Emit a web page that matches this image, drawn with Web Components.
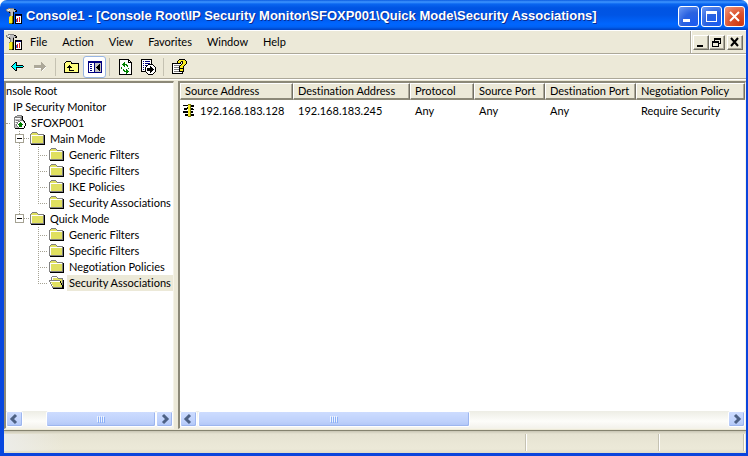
<!DOCTYPE html>
<html lang="en">
<head>
<meta charset="utf-8">
<title>Console1</title>
<style>
  html, body { height: 100%; margin: 0; }
  body {
    font-family: Lato, "Liberation Sans", sans-serif;
    font-size: 11px;
    font-variant-ligatures: none;
    line-height: 16px;
    color: #000;
    background: #fff;
    overflow: hidden;
    --face: #ece9d8;
    --shadow: #aca899;
    --dark: #716f64;
  }
</style>
</head>
<body>
<mmc-window>
  <title-bar slot="title">Console1 - [Console Root\IP Security Monitor\SFOXP001\Quick Mode\Security Associations]</title-bar>
  <menu-bar slot="menu"></menu-bar>
  <tool-bar slot="tools"></tool-bar>
  <scroll-pane slot="tree" before="24" size="110" after="0">
    <tree-item level="0">nsole Root</tree-item>
    <tree-item level="1">IP Security Monitor</tree-item>
    <tree-item level="2" icon="server">SFOXP001</tree-item>
    <tree-item level="3" icon="folder" guides="box">Main Mode</tree-item>
    <tree-item level="4" icon="folder" guides="line tee">Generic Filters</tree-item>
    <tree-item level="4" icon="folder" guides="line tee">Specific Filters</tree-item>
    <tree-item level="4" icon="folder" guides="line tee">IKE Policies</tree-item>
    <tree-item level="4" icon="folder" guides="line end">Security Associations</tree-item>
    <tree-item level="3" icon="folder" guides="boxend">Quick Mode</tree-item>
    <tree-item level="4" icon="folder" guides="none tee">Generic Filters</tree-item>
    <tree-item level="4" icon="folder" guides="none tee">Specific Filters</tree-item>
    <tree-item level="4" icon="folder" guides="none tee">Negotiation Policies</tree-item>
    <tree-item level="4" icon="open" guides="none end" selected>Security Associations</tree-item>
  </scroll-pane>
  <scroll-pane slot="list" before="1" size="272" after="259">
    <result-list></result-list>
  </scroll-pane>
  <status-bar slot="status"></status-bar>
</mmc-window>

<script>
const PALETTE = {
  k: '#000', w: '#fff', g: '#808080', s: '#c0c0c0', y: '#e0e060', Y: '#f8ec20',
  r: '#e02020', b: '#000080', B: '#3050e0', c: '#00ffff', G: '#008000', d: '#aca899',
  o: '#808000', l: '#ffff80'
};

const ICONS = {
  console: [
    '..gggggg........',
    'gsswsssskk......',
    'gswssssssgk.....',
    '.gggsssgskk.....',
    '...kgssk........',
    '....gssk........',
    '....gssk.kkkkkkk',
    '....gssk.kbbbbbk',
    '...gYYok.kwwwwwk',
    '...YYYok.kwwwrwk',
    '...YYYok.kwrwrwk',
    '...YYYok.kBrwrwk',
    '...YYYok.kBrwrwk',
    '...YYYok.kBrwrwk',
    '...YYYok.kwwwwwk',
    '...oookk.kkkkkkk'
  ],
  folder: [
    '................',
    '..ggggg.........',
    '.gyyyyyg........',
    'gyyyyyyygggggg..',
    'gwwwwwwwwwwwwgk.',
    'gwyyyyyyyyyyygk.',
    'gwyyyyyyyyyyygk.',
    'gwyyyyyyyyyyygk.',
    'gwyyyyyyyyyyygk.',
    'gwyyyyyyyyyyygk.',
    'gwyyyyyyyyyyygk.',
    'gwyyyyyyyyyyygk.',
    'ggggggggggggggk.',
    '.kkkkkkkkkkkkkk.'
  ],
  open: [
    '................',
    '...ggggg........',
    '..gwwwwwg.......',
    '..gwyyyyyggggg..',
    '..gwyyyyyyyyyg..',
    'gggggggggggyygk.',
    'gwwwwwwwwwwkygk.',
    '.gyyyyyyyyykygk.',
    '.gwyyyyyyyyykgk.',
    '..gyyyyyyyyykgk.',
    '..gwyyyyyyyyykk.',
    '...gyyyyyyyyykk.',
    '...ggggggggggkk.',
    '....kkkkkkkkkkk.'
  ],
  server: [
    '......ggggg.....',
    '....ggssssgk....',
    '...ggggggggk....',
    '...gwwwwwsgk....',
    '...gssssssgk....',
    '...gsgggsgggk...',
    '...gwwwggwwwgk..',
    '...gsggwwGwwwk..',
    '...gwwgwGGGwwwk.',
    '...gsgwGGGGGwwk.',
    '...gsgwwGGGwwwk.',
    '...gssgwGGGwwk..',
    '...gsssgwwwwwk..',
    '....kkkkkkkkk...'
  ],
  back: [
    '................',
    '................',
    '................',
    '.....kk.........',
    '....kck.........',
    '...kcck.........',
    '..kccckkkkkkk...',
    '.kccccccccccck..',
    '..kccckkkkkkk...',
    '...kcck.........',
    '....kck.........',
    '.....kk.........'
  ],
  forward: [
    '................',
    '................',
    '................',
    '........d.......',
    '........dd......',
    '........ddd.....',
    '.ddddddddddd....',
    '.dddddddddddd...',
    '.dddddddddddw...',
    '..wwwwwwdddw....',
    '........ddw.....',
    '........dw......'
  ],
  up: [
    '................',
    '................',
    '..kkkkk.........',
    '.klllllk........',
    'kllllllkkkkkkkk.',
    'klllllllllllllk.',
    'kllllkllllllllk.',
    'klllkkklllllllk.',
    'kllkkkkkllllllk.',
    'kllllkllllllllk.',
    'kllllkllllllllk.',
    'kllllkkkkkllllk.',
    'klllllllllllllk.',
    'kkkkkkkkkkkkkkk.'
  ],
  panes: [
    '................',
    '................',
    '.bbbbbbbbbbbbbb.',
    '.bbbbbbbbbbbbbb.',
    '.bwwwwwbssssssb.',
    '.bwbbwwbssssksb.',
    '.bwwwwwbssskksb.',
    '.bwbbwwbsskkksb.',
    '.bwwwwwbskkkksb.',
    '.bwbbwwbsskkksb.',
    '.bwwwwwbssskksb.',
    '.bwbbwwbssssksb.',
    '.bwwwwwbssssssb.',
    '.bbbbbbbbbbbbbb.'
  ],
  refresh: [
    '.kkkkkkkkkk.....',
    '.kwwwwwwwwkk....',
    '.kwwwwwwwwkwk...',
    '.kwwwwGwwwkkkk..',
    '.kwwwGGwwwwwwk..',
    '.kwwGGGGGwwwwk..',
    '.kwwwGGwGGwwwk..',
    '.kwwwwGwwGwwwk..',
    '.kwGwwwwwwwwwk..',
    '.kwGwwwwwwGwwk..',
    '.kwwwGwwGwwwwk..',
    '.kwwwGGwGGwwwk..',
    '.kwwwwGGGGGwwk..',
    '.kwwwwwwGGwwwk..',
    '.kwwwwwwGwwwwk..',
    '.kkkkkkkkkkkkk..'
  ],
  export: [
    'kkkkkkkkkkk.....',
    'kwwwwwwwwwk.....',
    'kwbwbbbbbwk.....',
    'kwwwwwwwwwk.....',
    'kwbwbbbbbwk.....',
    'kwwwwwwkkkkk....',
    'kwbwbbkwwwwwk...',
    'kwwwwkwwwkwwwk..',
    'kwbwkwwwwkkwwwk.',
    'kwwwkwkkkkkkwwk.',
    'kwbwkwkkkkkkkwk.',
    'kwwwkwkkkkkkwwk.',
    'kkkkkwwwwkkwwwk.',
    '.....kwwwkwwwk..',
    '......kwwwwwk...',
    '.......kkkkk....'
  ],
  help: [
    '.......kkkkkk...',
    '......kYYYYYYk..',
    '.....kYYYkkYYYk.',
    '.....kYYk.kYYYk.',
    'kkkkkkkkk.kYYYk.',
    'kwwwwwwwwkYYYk..',
    'kwggggggkYYYk...',
    'kwwwwwwkYYYk....',
    'kwgggggkYYYk....',
    'kwwwwwwkkkkk....',
    'kwgggggkYYYk....',
    'kwwwwwwkYYYk....',
    'kwgggggkkkkk....',
    'kwwwwwwwwwk.....',
    'kkkkkkkkkkk.....'
  ],
  link: [
    '................',
    '......ooo.......',
    '.kkkkkYYokkk....',
    '......YYokkk....',
    '.....kYYo.......',
    '..kkkkYYokk.....',
    '..kkk.YYokkk....',
    '......YYo.......',
    '.kkkkkYYokk.....',
    '.kkkkkYYokk.....',
    '......YYo.......',
    '...kkkYYokkk....',
    '...kkkYYokkk....',
    '......ooo.......'
  ]
};

function attach(el, html) {
  const template = document.createElement('template');
  template.innerHTML = html;
  el.attachShadow({ mode: 'open' }).appendChild(template.content.cloneNode(true));
  return el.shadowRoot;
}

// draws a 16x16 bitmap icon, one rect per run of equal pixels
class PixelIcon extends HTMLElement {
  connectedCallback() {
    if (this.shadowRoot) return;
    let rects = '';
    (ICONS[this.getAttribute('name')] || []).forEach((row, y) => {
      for (const m of row.matchAll(/(.)\1*/g)) {
        const fill = PALETTE[m[1]];
        if (fill) rects += `<rect x="${m.index}" y="${y}" width="${m[0].length}" height="1" fill="${fill}"/>`;
      }
    });
    attach(this, `
      <style>
        :host { display: block; flex: none; width: 16px; height: 16px; }
        svg { display: block; }
      </style>
      <svg width="16" height="16" viewBox="0 0 16 16" shape-rendering="crispEdges" aria-hidden="true">${rects}</svg>
    `);
  }
}

class MmcWindow extends HTMLElement {
  constructor() {
    super();
    attach(this, `
      <style>
        :host {
          display: flex;
          flex-direction: column;
          box-sizing: border-box;
          height: 100vh;
          background: var(--face);
          border-radius: 7px 7px 0 0;
          overflow: hidden;
        }
        .frame {
          flex: 1;
          min-height: 0;
          display: flex;
          flex-direction: column;
          border: solid #0a44dc;
          border-width: 0 2px 3px 4px;
          border-left-color: #0747df;
          box-shadow: inset 0 1px #fff;
        }
        .panes {
          flex: 1;
          min-height: 0;
          display: grid;
          grid-template-columns: 170px 1fr;
          gap: 4px;
          padding: 2px 0 1px;
          border-bottom: 1px solid #85836f;
        }
      </style>
      <slot name="title"></slot>
      <div class="frame">
        <slot name="menu"></slot>
        <slot name="tools"></slot>
        <div class="panes">
          <slot name="tree"></slot>
          <slot name="list"></slot>
        </div>
        <slot name="status"></slot>
      </div>
    `);
  }
}

class TitleBar extends HTMLElement {
  constructor() {
    super();
    attach(this, `
      <style>
        :host {
          display: flex;
          align-items: center;
          flex: none;
          box-sizing: border-box;
          height: 30px;
          padding: 2px 3px 0 6px;
          background: linear-gradient(#0a5be0 0, #3f96ff 2px, #0a66f0 4px, #0054e3 8px, #0055e5 15px, #0066ff 24px, #0062f5 27px, #0040c0 30px);
        }
        h1 {
          flex: 1;
          min-width: 0;
          margin: 0 0 0 4px;
          font: bold 13px/20px "Liberation Sans", sans-serif;
          color: #fff;
          text-shadow: 1px 1px #0a2a90;
          white-space: nowrap;
          overflow: hidden;
        }
        .buttons { display: flex; gap: 2px; }
        button {
          width: 21px;
          height: 21px;
          padding: 0;
          border: 1px solid #fff;
          border-radius: 3px;
          background: radial-gradient(circle at 80% 90%, #1c5cf0, #2a62e0 50%, #6f9cf5);
        }
        .close { background: radial-gradient(circle at 80% 90%, #d03a10, #dd5530 50%, #f09a80); }
        svg { display: block; }
      </style>
      <pixel-icon name="console"></pixel-icon>
      <h1><slot></slot></h1>
      <div class="buttons">
        <button aria-label="Minimize"><svg width="19" height="19" fill="#fff"><path d="M4 12h7v3H4z"/></svg></button>
        <button aria-label="Maximize"><svg width="19" height="19" fill="#fff" fill-rule="evenodd"><path d="M4 4h11v11H4zM5 7v7h9V7z"/></svg></button>
        <button class="close" aria-label="Close"><svg width="19" height="19" stroke="#fff" stroke-width="2"><path d="M5 5l9 9M14 5l-9 9"/></svg></button>
      </div>
    `);
  }
}

class MenuBar extends HTMLElement {
  constructor() {
    super();
    const items = ['File', 'Action', 'View', 'Favorites', 'Window', 'Help'];
    attach(this, `
      <style>
        :host {
          display: flex;
          flex: none;
          box-sizing: border-box;
          height: 24px;
          border-top: 1px solid #fff;
          border-bottom: 1px solid var(--shadow);
        }
        nav { flex: 1; display: flex; align-items: center; padding-left: 2px; }
        button { font: inherit; color: inherit; padding: 0; border: 0; background: none; }
        nav button { padding: 0 7px 0 8px; }
        .mdi {
          display: flex;
          align-items: center;
          padding: 0 3px 0 2px;
          border-left: 1px solid var(--shadow);
          box-shadow: inset 1px 0 #fff;
        }
        .mdi button {
          width: 16px;
          height: 15px;
          border: 1px solid;
          border-color: #fff var(--dark) var(--dark) #fff;
          box-shadow: inset -1px -1px var(--shadow);
        }
        .mdi button:last-child { margin-left: 2px; }
        svg { display: block; }
      </style>
      <nav>
        <pixel-icon name="console"></pixel-icon>
        ${items.map((t) => `<button>${t}</button>`).join('')}
      </nav>
      <div class="mdi">
        <button aria-label="Minimize document"><svg width="14" height="13"><path d="M3 9h6v2H3z"/></svg></button>
        <button aria-label="Restore document"><svg width="14" height="13" fill-rule="evenodd"><path d="M4 2h7v6H9V7h1V4H5v1H4zM2 5h7v6H2zM3 7v3h5V7z"/></svg></button>
        <button aria-label="Close document"><svg width="14" height="13" stroke="#000" stroke-width="2"><path d="M3 2l7 8M10 2l-7 8"/></svg></button>
      </div>
    `);
  }
}

class ToolBar extends HTMLElement {
  constructor() {
    super();
    const btn = (icon, label, cls = '') =>
      `<button class="${cls}" aria-label="${label}"><pixel-icon name="${icon}"></pixel-icon></button>`;
    attach(this, `
      <style>
        :host {
          display: flex;
          align-items: center;
          flex: none;
          box-sizing: border-box;
          height: 25px;
          padding-left: 2px;
          border-top: 1px solid #fff;
          border-bottom: 1px solid var(--shadow);
          box-shadow: 0 1px #fff;
        }
        button {
          display: grid;
          place-content: center;
          box-sizing: border-box;
          width: 23px;
          height: 22px;
          padding: 0;
          border: 1px solid transparent;
          border-radius: 3px;
          background: none;
        }
        .on { background: #fff; border-color: #98b5e2; }
        hr { width: 1px; height: 18px; margin: 0 4px 0 3px; border: 0; background: #c5c2b2; }
      </style>
      ${btn('back', 'Back')}
      ${btn('forward', 'Forward')}
      <hr>
      ${btn('up', 'Up One Level')}
      ${btn('panes', 'Show/Hide Console Tree', 'on')}
      <hr>
      ${btn('refresh', 'Refresh')}
      ${btn('export', 'Export List')}
      <hr>
      ${btn('help', 'Help')}
    `);
  }
}

class ScrollPane extends HTMLElement {
  connectedCallback() {
    if (this.shadowRoot) return;
    const grow = (name) => this.getAttribute(name);
    attach(this, `
      <style>
        :host {
          display: flex;
          flex-direction: column;
          min-width: 0;
          min-height: 0;
          border: solid;
          border-width: 2px 1px 1px 2px;
          border-color: #8c8978 #f5f3e8 #f5f3e8 #8c8978;
          background: #fff;
        }
        .view { flex: 1; min-height: 0; overflow: hidden; }
        .bar {
          display: flex;
          height: 17px;
          background: linear-gradient(#ededE5, #fdfdfa 60%, #f3f2ec);
        }
        .bar button, .thumb {
          box-sizing: border-box;
          height: 16px;
          border: 1px solid #fff;
          border-radius: 2px;
          background: linear-gradient(#cddcff, #bdd0fb 70%, #b0c5f5);
          box-shadow: inset -1px -1px #9db6ef;
        }
        .bar button { flex: none; width: 17px; padding: 0; }
        .thumb { display: grid; place-content: center; }
        svg { display: block; }
      </style>
      <div class="view"><slot></slot></div>
      <div class="bar">
        <button aria-label="Scroll left"><svg width="15" height="14" fill="none" stroke="#4d6185" stroke-width="3"><path d="M9 3L5 7l4 4"/></svg></button>
        <span style="flex: ${grow('before')} 0 0"></span>
        <div class="thumb" style="flex: ${grow('size')} 0 0">
          <svg width="8" height="7" shape-rendering="crispEdges"><path d="M0 0h1v6H0zM2 0h1v6H2zM4 0h1v6H4zM6 0h1v6H6z" fill="#eef4fe"/><path d="M1 1h1v6H1zM3 1h1v6H3zM5 1h1v6H5zM7 1h1v6H7z" fill="#8cb0f8"/></svg>
        </div>
        <span style="flex: ${grow('after')} 0 0"></span>
        <button aria-label="Scroll right"><svg width="15" height="14" fill="none" stroke="#4d6185" stroke-width="3"><path d="M6 3l4 4-4 4"/></svg></button>
      </div>
    `);
  }
}

const BOX = '<path d="M5.5 3.5h8v8h-8z" fill="#fff" stroke="#a5a293"/><path d="M7 7.5h5" stroke="#000"/>';
const dots = (d) => `<path d="${d}" stroke="#a5a293" stroke-dasharray="1 1"/>`;
const GUIDES = {
  none: '',
  line: dots('M9.5 0v16'),
  tee: dots('M9.5 0v16M9 8.5h10'),
  end: dots('M9.5 0v8M9 8.5h10'),
  box: dots('M9.5 0v16M14 7.5h5') + BOX,
  boxend: dots('M9.5 0v4M14 7.5h5') + BOX
};

class TreeItem extends HTMLElement {
  connectedCallback() {
    if (this.shadowRoot) return;
    const icon = this.getAttribute('icon');
    const guides = (this.getAttribute('guides') || '').split(' ').filter(Boolean);
    attach(this, `
      <style>
        :host { display: flex; height: 16px; white-space: nowrap; }
        .guide { flex: none; width: 19px; height: 16px; }
        .guide:first-of-type { margin-left: 4px; }
        pixel-icon { margin: 0 2px 0 1px; }
        .label { padding: 0 2px; }
        :host([level="0"]) .label { padding: 0; }
        :host([level="1"]) .label { margin-left: 5px; }
        :host([level="2"])::before {
          content: "";
          width: 4px;
          margin-top: 8px;
          border-top: 1px dotted #a5a293;
        }
        :host([selected]) .label { flex: 1; background: var(--face); }
      </style>
      ${guides.map((g) => `<svg class="guide" shape-rendering="crispEdges">${GUIDES[g]}</svg>`).join('')}
      ${icon ? `<pixel-icon name="${icon}"></pixel-icon>` : ''}
      <span class="label"><slot></slot></span>
    `);
  }
}

class ResultList extends HTMLElement {
  constructor() {
    super();
    const columns = [
      ['Source Address', 113], ['Destination Address', 117], ['Protocol', 64],
      ['Source Port', 71], ['Destination Port', 91], ['Negotiation Policy', 0]
    ];
    const row = ['192.168.183.128', '192.168.183.245', 'Any', 'Any', 'Any', 'Require Security'];
    attach(this, `
      <style>
        :host { display: block; }
        table { width: 100%; table-layout: fixed; border-collapse: separate; border-spacing: 0; }
        th, td { padding: 0 0 0 4px; text-align: left; font-weight: normal; white-space: nowrap; overflow: hidden; }
        th {
          height: 14px;
          line-height: 14px;
          background: var(--face);
          border: solid;
          border-width: 1px 1px 2px;
          border-color: #fff var(--dark) #8c8978 #fff;
          box-shadow: inset -1px 0 var(--shadow);
        }
        td { height: 16px; padding: 3px 0 0 5px; }
        .first { display: flex; gap: 2px; }
        td:first-child { padding-left: 2px; }
      </style>
      <table>
        <colgroup>${columns.map(([, w]) => (w ? `<col style="width: ${w}px">` : '<col>')).join('')}</colgroup>
        <thead><tr>${columns.map(([t]) => `<th scope="col">${t}</th>`).join('')}</tr></thead>
        <tbody><tr>${row.map((t, i) => (i ? `<td>${t}</td>` : `<td><div class="first"><pixel-icon name="link"></pixel-icon>${t}</div></td>`)).join('')}</tr></tbody>
      </table>
    `);
  }
}

class StatusBar extends HTMLElement {
  constructor() {
    super();
    attach(this, `
      <style>
        :host {
          display: flex;
          flex: none;
          box-sizing: border-box;
          height: 22px;
          padding: 3px 0 2px;
          background: linear-gradient(#c8c5b4, #e6e3d2 3px, #ece9d8 18px, #dedbc8);
        }
        span { border-right: 1px solid #c5c2b2; box-shadow: 1px 0 #fff; }
        .text { flex: 1; background: linear-gradient(90deg, #ecece8, transparent 60px); }
        .mid { width: 132px; }
        .end { width: 84px; margin-right: 2px; }
      </style>
      <span class="text"></span><span class="mid"></span><span class="end"></span>
    `);
  }
}

customElements.define('pixel-icon', PixelIcon);
customElements.define('mmc-window', MmcWindow);
customElements.define('title-bar', TitleBar);
customElements.define('menu-bar', MenuBar);
customElements.define('tool-bar', ToolBar);
customElements.define('scroll-pane', ScrollPane);
customElements.define('tree-item', TreeItem);
customElements.define('result-list', ResultList);
customElements.define('status-bar', StatusBar);
</script>
</body>
</html>
